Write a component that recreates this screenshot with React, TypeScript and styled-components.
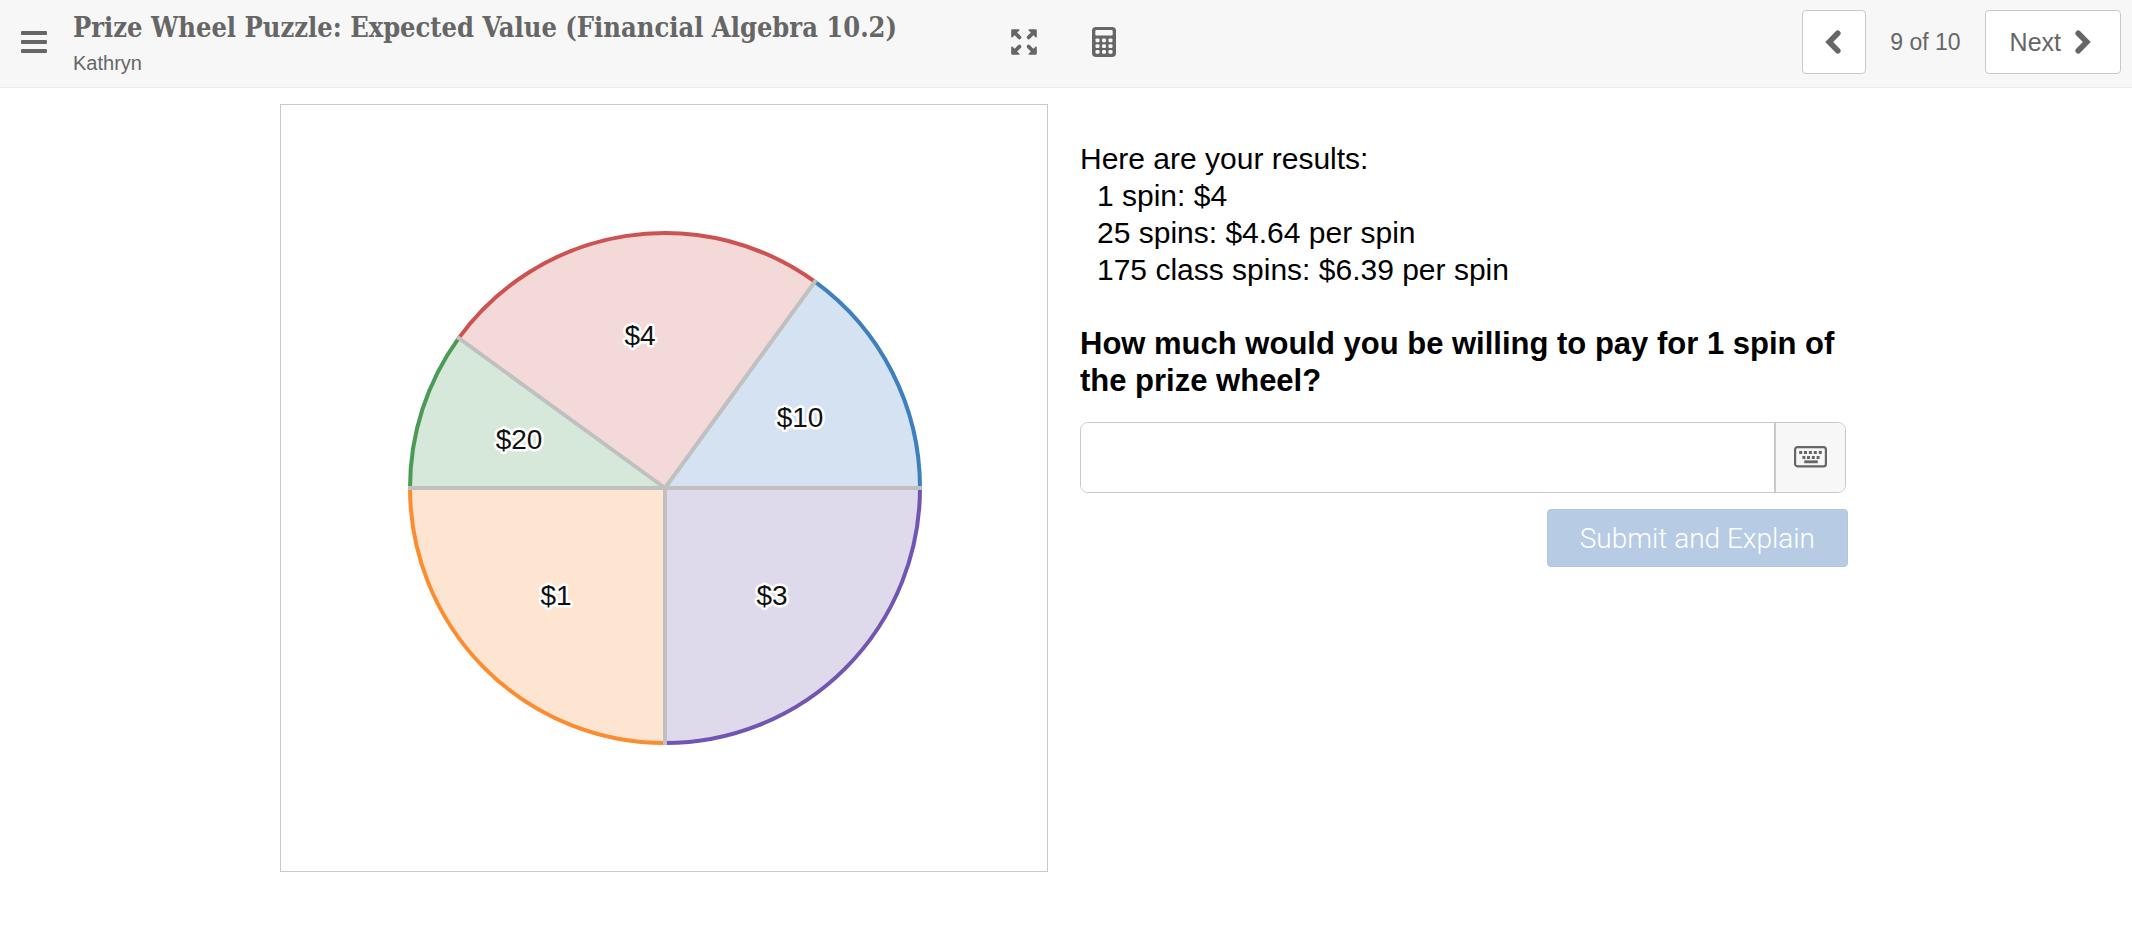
import React from 'react';
import styled, { createGlobalStyle } from 'styled-components';

const ink = '#666666';
const line = '#c9c9c9';
const soft = '#f7f7f7';
const sans = '"Liberation Sans", Arial, sans-serif';

const GlobalStyle = createGlobalStyle`
  *, *::before, *::after { box-sizing: border-box; }
  body { margin: 0; background: #ffffff; font-family: ${sans}; color: #000000; }
  button, input { font: inherit; color: inherit; margin: 0; }
  h1, p, ul { margin: 0; padding: 0; }
  svg { display: block; }
`;

const Header = styled.header`
  display: grid;
  grid-template-columns: minmax(0, 1fr) auto minmax(0, 1fr);
  height: 88px;
  padding: 0 11px 0 7px;
  background: ${soft};
  border-bottom: 1px solid #ebebeb;
  color: ${ink};
`;

const HeaderStart = styled.div`
  display: flex;
  gap: 12px;
  min-width: 0;
`;

const IconButton = styled.button<{ $width: number }>`
  display: flex;
  align-items: center;
  justify-content: center;
  flex: none;
  width: ${p => p.$width}px;
  height: 84px;
  padding: 0;
  border: 0;
  background: transparent;
  cursor: pointer;
`;

const Heading = styled.div`
  display: flex;
  flex-direction: column;
  min-width: 0;
  padding-top: 12px;
`;

const Title = styled.h1`
  font-family: "DejaVu Serif Condensed", "DejaVu Serif", serif;
  font-size: 27px;
  line-height: 32px;
  font-weight: 700;
  white-space: nowrap;
  overflow: hidden;
  text-overflow: ellipsis;
`;

const Student = styled.p`
  padding-top: 6px;
  font-size: 20px;
  line-height: 26px;
`;

const Tools = styled.div`
  display: flex;
`;

const Pager = styled.nav`
  display: flex;
  align-items: center;
  justify-content: flex-end;
  gap: 24px;
  height: 84px;
  font-size: 23px;
`;

const PageButton = styled.button<{ $labelled?: boolean }>`
  display: flex;
  align-items: center;
  justify-content: space-between;
  gap: 14px;
  height: 64px;
  padding: ${p => (p.$labelled ? '0 29px 0 24px' : '0 24px 0 22px')};
  background: #ffffff;
  border: 1px solid ${line};
  border-radius: 4px;
  font-size: 25px;
  cursor: pointer;
`;

const Main = styled.main`
  padding: 16px 20px 16px 16px;
`;

const Columns = styled.div`
  display: grid;
  grid-template-columns: repeat(2, minmax(0, 1fr));
  gap: 32px;
  align-items: start;
  max-width: 1568px;
  margin: 0 auto;
`;

const WheelPanel = styled.section`
  border: 1px solid ${line};
  aspect-ratio: 1;
  svg { width: 100%; height: 100%; }
`;

const SliceLabel = styled.text`
  font-family: ${sans};
  font-size: 28px;
  text-anchor: middle;
  fill: #111111;
  stroke: #ffffff;
  stroke-width: 5px;
  stroke-linejoin: round;
  paint-order: stroke;
`;

const Form = styled.form`
  display: flex;
  flex-direction: column;
  padding-top: 36px;
  font-size: 30px;
  line-height: 37px;
`;

const Results = styled.ul`
  list-style: none;
  && { padding-left: 17px; }
`;

const Question = styled.label`
  padding-top: 37px;
  font-size: 31px;
  font-weight: 700;
`;

const AnswerBox = styled.div`
  display: flex;
  height: 71px;
  margin: 23px 2px 0 0;
  border: 1px solid ${line};
  border-radius: 8px;
  overflow: hidden;
`;

const AnswerInput = styled.input`
  flex: 1;
  min-width: 0;
  padding: 0 16px;
  border: 0;
  background: #ffffff;
  outline: none;
`;

const KeypadButton = styled.button`
  display: flex;
  align-items: center;
  justify-content: center;
  width: 71px;
  padding: 0;
  border: 0;
  border-left: 2px solid ${line};
  background: ${soft};
  color: ${ink};
`;

const SubmitButton = styled.button`
  align-self: flex-end;
  height: 58px;
  padding: 0 32px;
  border: 1px solid #b0c6df;
  border-radius: 4px;
  background: #b7cce4;
  font-family: Roboto, ${sans};
  font-size: 28px;
  font-weight: 300;

  && { margin-top: 16px; color: #ffffff; }
`;

const MenuIcon = () => (
  <svg width="26" height="22" viewBox="0 0 26 22" fill="currentColor" aria-hidden="true">
    <rect width="26" height="4" rx="1" />
    <rect y="9" width="26" height="4" rx="1" />
    <rect y="18" width="26" height="4" rx="1" />
  </svg>
);

const ExpandIcon = () => (
  <svg width="26" height="26" viewBox="0 0 26 26" aria-hidden="true">
    {[0, 90, 180, 270].map(angle => (
      <g key={angle} transform={`rotate(${angle} 13 13)`}>
        <path d="M1.4 .2H7.6Q9 .2 8.4 1.3L1.3 8.4Q.2 9 .2 7.6V1.4Q.2 .2 1.4 .2Z" fill="currentColor" />
        <path d="M4 4L8.4 8.4" stroke="currentColor" strokeWidth="3.8" strokeLinecap="round" />
      </g>
    ))}
  </svg>
);

const CalculatorIcon = () => (
  <svg width="24" height="30" viewBox="0 0 24 30" aria-hidden="true">
    <rect width="24" height="30" rx="4" fill="currentColor" />
    <rect x="3.3" y="3" width="17.4" height="5.6" rx="1" fill={soft} />
    {[11.4, 17.2, 23].map(y =>
      [3.5, 10, 16.5].map(x => (
        <rect key={`${x}-${y}`} x={x} y={y} width="4" height="3.8" rx="1.2" fill={soft} />
      )),
    )}
  </svg>
);

const Chevron = ({ next }: { next?: boolean }) => (
  <svg width="16" height="24" viewBox="0 0 16 24" fill="none" aria-hidden="true">
    <path
      d={next ? 'M3.2 3.2L11.8 12L3.2 20.8' : 'M12.8 3.2L4.2 12L12.8 20.8'}
      stroke="currentColor"
      strokeWidth="5.6"
      strokeLinecap="round"
      strokeLinejoin="miter"
    />
  </svg>
);

const KeyboardIcon = () => (
  <svg width="33" height="23" viewBox="0 0 33 23" aria-hidden="true">
    <rect x="1.1" y="1.1" width="30.8" height="19.2" rx="2.4" fill="none" stroke="currentColor" strokeWidth="2.2" />
    <g fill="currentColor">
      {[5.2, 10, 14.9, 19.8, 24.8].map(x => (
        <rect key={x} x={x} y="5" width="3" height="3" />
      ))}
      {[8.4, 13, 17.8, 22.6].map(x => (
        <rect key={x} x={x} y="10" width="3" height="3" />
      ))}
      <rect x="10.2" y="14.4" width="13.6" height="2.8" />
    </g>
  </svg>
);

type Slice = {
  prize: string;
  from: number;
  to: number;
  edge: string;
  fill: string;
  x: number;
  y: number;
};

const slices: Slice[] = [
  { prize: '$10', from: 0, to: 54, edge: '#3e7fbe', fill: '#d5e2f1', x: 519, y: 322 },
  { prize: '$4', from: 54, to: 144, edge: '#cc5351', fill: '#f4d9d9', x: 359, y: 240 },
  { prize: '$20', from: 144, to: 180, edge: '#4a9a58', fill: '#d5e8da', x: 238, y: 344 },
  { prize: '$1', from: 180, to: 270, edge: '#fc8c30', fill: '#fee5d2', x: 275, y: 500 },
  { prize: '$3', from: 270, to: 360, edge: '#7055b3', fill: '#ded9eb', x: 491, y: 500 },
];

const cx = 384;
const cy = 383;

const point = (angle: number, radius: number) => {
  const a = (angle * Math.PI) / 180;
  return `${(cx + radius * Math.cos(a)).toFixed(2)} ${(cy - radius * Math.sin(a)).toFixed(2)}`;
};

const Wheel = () => (
  <svg viewBox="0 0 766 766" role="img" aria-label="Prize wheel">
    {slices.map(s => {
      const arc = `${point(s.from, 255)}A255 255 0 0 0 ${point(s.to, 255)}`;
      return (
        <g key={s.prize}>
          <path d={`M${cx} ${cy}L${arc}Z`} fill={s.fill} />
          <path d={`M${arc}`} fill="none" stroke={s.edge} strokeWidth="4" />
        </g>
      );
    })}
    {slices.map(s => (
      <path key={s.prize} d={`M${cx} ${cy}L${point(s.from, 257)}`} stroke="#c0c0c0" strokeWidth="4" />
    ))}
    {slices.map(s => (
      <SliceLabel key={s.prize} x={s.x} y={s.y}>
        {s.prize}
      </SliceLabel>
    ))}
  </svg>
);

export default function App() {
  return (
    <>
      <GlobalStyle />
      <Header>
        <HeaderStart>
          <IconButton $width={54} aria-label="Menu">
            <MenuIcon />
          </IconButton>
          <Heading>
            <Title>Prize Wheel Puzzle: Expected Value (Financial Algebra 10.2)</Title>
            <Student>Kathryn</Student>
          </Heading>
        </HeaderStart>
        <Tools>
          <IconButton $width={80} aria-label="Full screen">
            <ExpandIcon />
          </IconButton>
          <IconButton $width={80} aria-label="Calculator">
            <CalculatorIcon />
          </IconButton>
        </Tools>
        <Pager aria-label="Screens">
          <PageButton aria-label="Previous">
            <Chevron />
          </PageButton>
          <span>9 of 10</span>
          <PageButton $labelled>
            Next
            <Chevron next />
          </PageButton>
        </Pager>
      </Header>
      <Main>
        <Columns>
          <WheelPanel>
            <Wheel />
          </WheelPanel>
          <Form onSubmit={e => e.preventDefault()}>
            <p>Here are your results:</p>
            <Results>
              <li>1 spin: $4</li>
              <li>25 spins: $4.64 per spin</li>
              <li>175 class spins: $6.39 per spin</li>
            </Results>
            <Question htmlFor="answer">
              How much would you be willing to pay for 1 spin of the prize wheel?
            </Question>
            <AnswerBox>
              <AnswerInput id="answer" type="text" autoComplete="off" />
              <KeypadButton type="button" aria-label="Keypad">
                <KeyboardIcon />
              </KeypadButton>
            </AnswerBox>
            <SubmitButton type="submit" disabled>
              Submit and Explain
            </SubmitButton>
          </Form>
        </Columns>
      </Main>
    </>
  );
}
